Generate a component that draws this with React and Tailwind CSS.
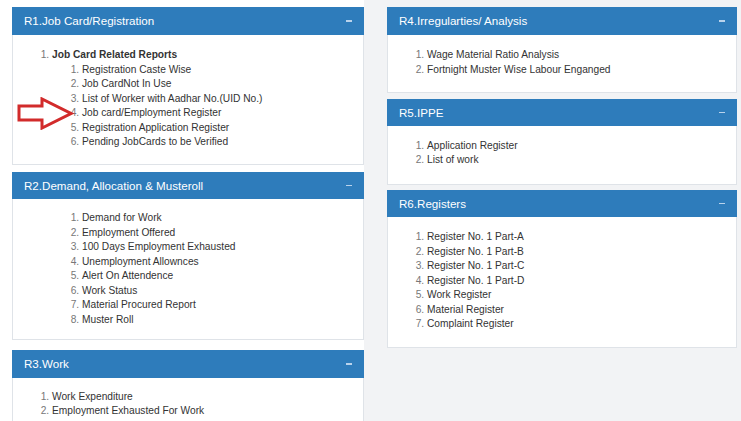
import React from "react";

const font = { fontFamily: '"Liberation Sans", Arial, sans-serif' };

const Panel = ({ title, className, headClass, bodyClass, children }) => (
  <div className={className}>
    <div
      className={`flex items-center justify-between bg-[#2e7cbb] pl-[12px] pr-[12px] text-[11.6px] text-white ${headClass}`}
    >
      <span>{title}</span>
      <span className="block h-[1.5px] w-[6px] bg-[#b9d3ec]" />
    </div>
    <div
      className={`border border-t-0 border-[#dfe3e8] bg-white text-[10.2px] leading-[14.5px] text-[#333] ${bodyClass}`}
    >
      {children}
    </div>
  </div>
);

const List = ({ items, className }) => (
  <ol className={`list-decimal marker:text-[#777] ${className}`}>
    {items.map((item) => (
      <li key={item}>{item}</li>
    ))}
  </ol>
);

export default function App() {
  return (
    <div className="relative flex h-[421px] w-[741px] overflow-hidden bg-white" style={font}>
      {/* left column */}
      <div className="w-[364px] pl-[12px]">
        <Panel
          title="R1.Job Card/Registration"
          className="mt-[7px]"
          headClass="h-[28px]"
          bodyClass="pt-[13px] pb-[14.5px]"
        >
          <ol className="list-decimal pl-[39px] marker:text-[#777]">
            <li>
              <span className="font-bold">Job Card Related Reports</span>
              <List
                className="pl-[30px]"
                items={[
                  "Registration Caste Wise",
                  "Job CardNot In Use",
                  "List of Worker with Aadhar No.(UID No.)",
                  "Job card/Employment Register",
                  "Registration Application Register",
                  "Pending JobCards to be Verified",
                ]}
              />
            </li>
          </ol>
        </Panel>

        <Panel
          title="R2.Demand, Allocation & Musteroll"
          className="mt-[7px]"
          headClass="h-[27px]"
          bodyClass="pt-[12px] pb-[12px]"
        >
          <List
            className="pl-[69px]"
            items={[
              "Demand for Work",
              "Employment Offered",
              "100 Days Employment Exhausted",
              "Unemployment Allownces",
              "Alert On Attendence",
              "Work Status",
              "Material Procured Report",
              "Muster Roll",
            ]}
          />
        </Panel>

        <Panel title="R3.Work" className="mt-[10px]" headClass="h-[28px]" bodyClass="pt-[11.5px] pb-[16px]">
          <List className="pl-[39px]" items={["Work Expenditure", "Employment Exhausted For Work"]} />
        </Panel>
      </div>

      {/* right column */}
      <div className="flex-1 bg-[#f2f3f5] pl-[23px] pr-[4px]">
        <Panel
          title="R4.Irregularties/ Analysis"
          className="mt-[7px]"
          headClass="h-[28px]"
          bodyClass="pt-[13px] pb-[15px]"
        >
          <List
            className="pl-[39px]"
            items={["Wage Material Ratio Analysis", "Fortnight Muster Wise Labour Enganged"]}
          />
        </Panel>

        <Panel title="R5.IPPE" className="mt-[6px]" headClass="h-[27px]" bodyClass="pt-[12.5px] pb-[16.5px]">
          <List className="pl-[39px]" items={["Application Register", "List of work"]} />
        </Panel>

        <Panel title="R6.Registers" className="mt-[5px]" headClass="h-[27px]" bodyClass="pt-[13px] pb-[15.5px]">
          <List
            className="pl-[39px]"
            items={[
              "Register No. 1 Part-A",
              "Register No. 1 Part-B",
              "Register No. 1 Part-C",
              "Register No. 1 Part-D",
              "Work Register",
              "Material Register",
              "Complaint Register",
            ]}
          />
        </Panel>
      </div>

      {/* red annotation arrow */}
      <svg className="absolute left-[17px] top-[97px]" width="57" height="33" viewBox="0 0 57 33">
        <polygon
          points="2,9 25,9 25,2 54,16.5 25,31 25,23 2,23"
          fill="#ffffff"
          stroke="#d22b2b"
          strokeWidth="3"
          strokeLinejoin="miter"
        />
      </svg>
    </div>
  );
}
